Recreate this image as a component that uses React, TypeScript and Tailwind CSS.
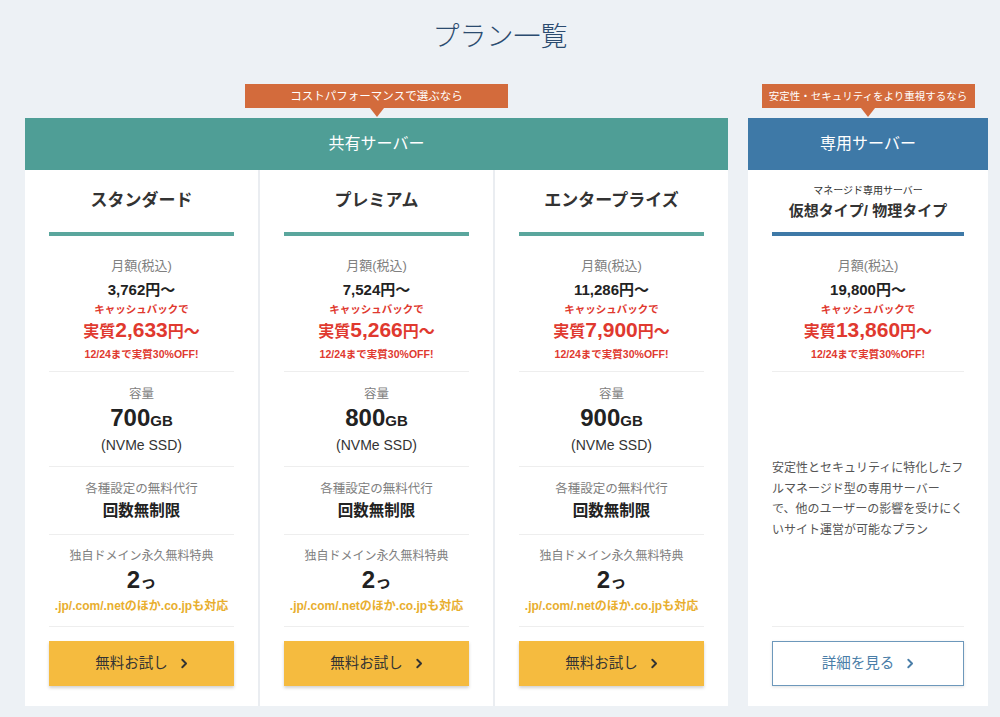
const plans = [
  { name: 'スタンダード', price: '3,762', real: '2,633', cap: '700' },
  { name: 'プレミアム', price: '7,524', real: '5,266', cap: '800' },
  { name: 'エンタープライズ', price: '11,286', real: '7,900', cap: '900' },
];

function Chevron() {
  return (
    <svg viewBox="0 0 10 16" className="w-[8px] h-[11px]" fill="none">
      <path d="M2.5 2.5l5.5 5.5-5.5 5.5" stroke="currentColor" strokeWidth="2.8" strokeLinecap="round" strokeLinejoin="round" />
    </svg>
  );
}

function Tag({ text, className }: { text: string; className: string }) {
  return (
    <div className={`relative h-[24px] bg-[#d36b3c] text-white leading-[24px] text-center whitespace-nowrap ${className}`}>
      {text}
      <div className="absolute left-1/2 -translate-x-1/2 top-[24px] w-0 h-0 border-x-[7px] border-x-transparent border-t-[9px] border-t-[#d36b3c]" />
    </div>
  );
}

function Price({ price, real }: { price: string; real: string }) {
  return (
    <div className="h-[135px] pt-[20px] flex flex-col items-center">
      <div className="text-[13px] leading-5 text-[#808080]">月額(税込)</div>
      <div className="mt-[3px] text-[15px] leading-[22px] font-bold text-[#222]">{price}円〜</div>
      <div className="text-[10.5px] leading-4 font-bold text-[#e0392f]">キャッシュバックで</div>
      <div className="leading-[26px] font-bold text-[#e0392f]">
        <span className="text-[16px]">実質</span>
        <span className="text-[21px]">{real}</span>
        <span className="text-[16px]">円〜</span>
      </div>
      <div className="mt-[1px] text-[10.5px] leading-4 font-bold text-[#e0392f]">12/24まで実質30%OFF!</div>
    </div>
  );
}

export default function App() {
  return (
    <div className="min-h-[717px] bg-[#edf1f5] font-['Liberation_Sans','Noto_Sans_CJK_JP',sans-serif] text-[#333]">
      <h1 className="pt-[20px] text-center text-[27px] leading-[34px] font-light text-[#2b4b6f]">プラン一覧</h1>

      <div className="mt-[30px] pl-[25px] flex gap-[20px]">
        {/* 共有サーバー */}
        <div className="w-[703px] flex flex-col">
          <div className="h-[34px] flex justify-center">
            <Tag text="コストパフォーマンスで選ぶなら" className="w-[263px] text-[11.5px]" />
          </div>
          <div className="h-[52px] bg-[#4f9e96] text-white text-[16px] flex items-center justify-center">共有サーバー</div>
          <div className="flex bg-white">
            {plans.map((p, i) => (
              <div key={p.name} className={`flex-1 px-6 ${i < 2 ? 'border-r-2 border-[#eaedf1]' : ''}`}>
                <div className="h-[62px] flex items-center justify-center text-[17px] font-bold text-[#333]">{p.name}</div>
                <div className="h-[4px] bg-[#5aa69d]" />
                <Price price={p.price} real={p.real} />
                <div className="h-[95px] border-t border-[#eeeeee] flex flex-col items-center justify-center">
                  <div className="text-[12.5px] leading-5 text-[#808080]">容量</div>
                  <div className="leading-[28px] font-bold text-[#222]">
                    <span className="text-[24px]">{p.cap}</span>
                    <span className="text-[15px]">GB</span>
                  </div>
                  <div className="text-[14px] leading-5 text-[#333]">(NVMe SSD)</div>
                </div>
                <div className="h-[68px] border-t border-[#eeeeee] flex flex-col items-center justify-center">
                  <div className="text-[12.5px] leading-5 text-[#808080]">各種設定の無料代行</div>
                  <div className="text-[15.5px] leading-6 font-bold text-[#222]">回数無制限</div>
                </div>
                <div className="h-[92px] border-t border-[#eeeeee] flex flex-col items-center justify-center">
                  <div className="text-[12px] leading-5 text-[#808080]">独自ドメイン永久無料特典</div>
                  <div className="leading-[28px] font-bold text-[#222]">
                    <span className="text-[24px]">2</span>
                    <span className="text-[16px]">っ</span>
                  </div>
                  <div className="text-[12px] leading-[18px] font-bold text-[#e8ae2e] whitespace-nowrap">.jp/.com/.netのほか.co.jpも対応</div>
                </div>
                <div className="h-[80px] border-t border-[#eeeeee] pt-[14px]">
                  <button className="w-full h-[45px] bg-[#f5bb3f] text-[#333] text-[14.5px] flex items-center justify-center gap-[12px] shadow-[0_2px_3px_rgba(0,0,0,0.18)]">
                    無料お試し
                    <Chevron />
                  </button>
                </div>
              </div>
            ))}
          </div>
        </div>

        {/* 専用サーバー */}
        <div className="w-[240px] flex flex-col">
          <div className="h-[34px] flex justify-center">
            <Tag text="安定性・セキュリティをより重視するなら" className="w-[213px] text-[10.5px]" />
          </div>
          <div className="h-[52px] bg-[#3e79a7] text-white text-[16px] flex items-center justify-center">専用サーバー</div>
          <div className="bg-white px-6">
            <div className="h-[62px] pt-[4px] flex flex-col items-center justify-center">
              <div className="text-[10px] leading-4 text-[#333]">マネージド専用サーバー</div>
              <div className="text-[15px] leading-6 font-bold text-[#333]">仮想タイプ/ 物理タイプ</div>
            </div>
            <div className="h-[4px] bg-[#3e79a7]" />
            <Price price="19,800" real="13,860" />
            <div className="h-[255px] border-t border-[#eeeeee] flex items-center">
              <p className="text-[12px] leading-[20.5px] text-[#555] whitespace-nowrap">
                安定性とセキュリティに特化したフ
                <br />
                ルマネージド型の専用サーバー
                <br />
                で、他のユーザーの影響を受けにく
                <br />
                いサイト運営が可能なプラン
              </p>
            </div>
            <div className="h-[80px] border-t border-[#eeeeee] pt-[14px]">
              <button className="w-full h-[45px] bg-white border border-[#6d98bb] text-[#4a7ea8] text-[14.5px] flex items-center justify-center gap-[12px] shadow-[0_1px_3px_rgba(0,0,0,0.12)]">
                詳細を見る
                <Chevron />
              </button>
            </div>
          </div>
        </div>
      </div>
    </div>
  );
}
